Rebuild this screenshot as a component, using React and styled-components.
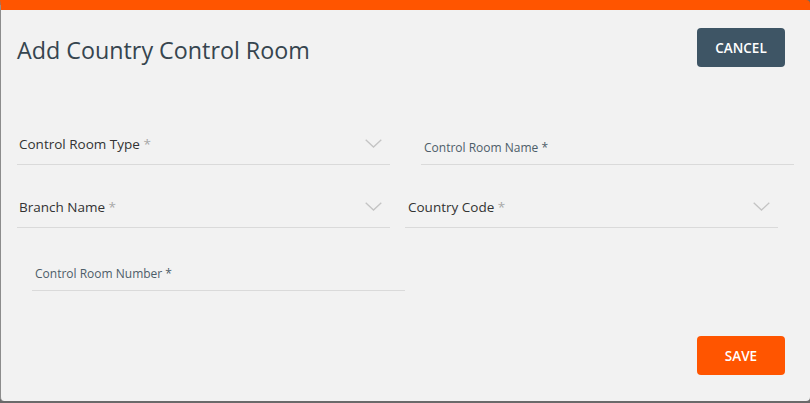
import React from 'react';
import styled, {createGlobalStyle} from "styled-components";

const COLOR = {
    ORANGE: "#ff5500",
    SLATE: "#3e5565",
    PANEL: "#f2f2f2",
    LINE: "#dadada",
    TITLE: "#36454f",
};

const GlobalStyle = createGlobalStyle`
  html, body {
    margin: 0;
    padding: 0;
    background: #6a6a6a;
    font-family: "Open Sans", "Liberation Sans", sans-serif;
  }
`

function Chevron() {
    return (
        <svg width="17" height="9" viewBox="0 0 17 9" fill="none">
            <path d="M0.7 0.7 L8.5 8 L16.3 0.7" stroke="#c4c4c4" strokeWidth="1.3"/>
        </svg>
    );
}

function SelectField({label, inset}) {
    return (
        <Field variant="select" inset={inset}>
            <SelectLabel>{label} <Star>*</Star></SelectLabel>
            <ChevronBox><Chevron/></ChevronBox>
        </Field>
    );
}

function InputField({label}) {
    return (
        <Field variant="input">
            <InputLabel>{label} *</InputLabel>
        </Field>
    );
}

function App() {
    return (
        <>
            <GlobalStyle/>
            <Dialog>
                <Header>
                    <Title>Add Country Control Room</Title>
                    <Button color={COLOR.SLATE}>CANCEL</Button>
                </Header>
                <Form>
                    <Row indent={17} gap={31}>
                        <SelectField label="Control Room Type"/>
                        <InputField label="Control Room Name"/>
                    </Row>
                    <Row indent={17} gap={15}>
                        <SelectField label="Branch Name"/>
                        <SelectField label="Country Code" inset={3}/>
                    </Row>
                    <Row indent={32} gap={0}>
                        <InputField label="Control Room Number"/>
                    </Row>
                </Form>
                <Footer>
                    <Button color={COLOR.ORANGE}>SAVE</Button>
                </Footer>
            </Dialog>
        </>
    );
}

const Dialog = styled.div`
  box-sizing: border-box;
  width: 810px;
  height: 401px;
  background-color: ${COLOR.PANEL};
  border-top: 10px solid ${COLOR.ORANGE};
  border-left: 1px solid #8c8c8c;
  border-radius: 0 4px 4px 4px;
  display: flex;
  flex-direction: column;
`

const Header = styled.div`
  display: flex;
  justify-content: space-between;
  align-items: flex-start;
  padding: 18px 25px 0 16px;
`

const Title = styled.h2`
  margin: 7px 0 0;
  font-size: 23.3px;
  font-weight: 400;
  color: ${COLOR.TITLE};
  line-height: 31px;
`

const Button = styled.button`
  width: 88px;
  height: 39px;
  border: none;
  border-radius: 4px;
  background-color: ${props => props.color};
  color: white;
  font-family: "Open Sans", "Liberation Sans", sans-serif;
  font-size: 13.5px;
  font-weight: 600;
  cursor: pointer;
`

const Form = styled.div`
  padding-top: 57px;
  display: flex;
  flex-direction: column;
  gap: 22px;
`

const Row = styled.div`
  display: flex;
  gap: ${props => props.gap}px;
  padding-left: ${props => props.indent - 1}px;
`

const Field = styled.div`
  box-sizing: border-box;
  width: 373px;
  height: 41px;
  border-bottom: 1px solid ${COLOR.LINE};
  display: flex;
  align-items: flex-end;
  justify-content: space-between;
  padding: ${props => props.variant === "select"
          ? `0 8px 11px ${props.inset || 2}px`
          : "0 0 8px 3px"};
`

const SelectLabel = styled.span`
  font-size: 13.5px;
  line-height: 18px;
  color: #333;
`

const Star = styled.span`
  color: #a8a8a8;
`

const InputLabel = styled.span`
  font-size: 12px;
  line-height: 16px;
  color: #4d5d69;
`

const ChevronBox = styled.span`
  display: flex;
  padding-bottom: 5px;
`

const Footer = styled.div`
  display: flex;
  justify-content: flex-end;
  padding: 45px 25px 0 0;
`

export default App;
